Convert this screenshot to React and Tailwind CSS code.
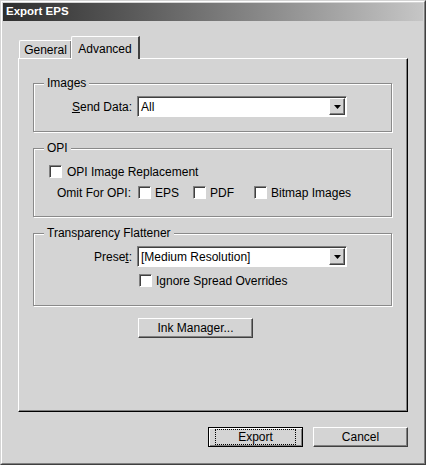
import React from "react";

const font = { fontFamily: '"Liberation Sans", Arial, sans-serif' };

function Check({ className = "" }) {
  return (
    <span
      className={
        "inline-block shrink-0 w-[13px] h-[13px] bg-white border border-t-[#808080] border-l-[#808080] border-b-white border-r-white shadow-[inset_1px_1px_0_#404040] " +
        className
      }
    />
  );
}

function Select({ value }) {
  return (
    <div className="w-[210px] h-[21px] bg-white border border-t-[#808080] border-l-[#808080] border-b-white border-r-white shadow-[inset_1px_1px_0_#404040] flex items-center">
      <span className="flex-1 pl-[3px] text-[12px] text-black leading-none">{value}</span>
      <span className="w-[16px] h-[17px] mr-[1px] bg-[#d4d4d4] border border-t-white border-l-white border-b-[#404040] border-r-[#404040] shadow-[inset_-1px_-1px_0_#808080] flex items-center justify-center">
        <svg width="7" height="4" viewBox="0 0 7 4"><path d="M0 0h7L3.5 4z" fill="#000" /></svg>
      </span>
    </div>
  );
}

function Group({ label, className = "", children }) {
  return (
    <div className={"relative border border-[#8a8a8a] shadow-[inset_1px_1px_0_#fff,1px_1px_0_#fff] " + className}>
      <span className="absolute left-[10px] top-[-8px] bg-[#d4d4d4] px-[3px] text-[12px] leading-[14px] text-black">
        {label}
      </span>
      {children}
    </div>
  );
}

function Button({ children, className = "", def = false }) {
  return (
    <div
      className={
        "h-[20px] flex items-center justify-center text-[12px] text-black bg-[#d4d4d4] " +
        (def
          ? "border border-black shadow-[inset_1px_1px_0_#fff,inset_-1px_-1px_0_#808080] "
          : "border border-t-white border-l-white border-b-[#404040] border-r-[#404040] shadow-[inset_-1px_-1px_0_#808080] ") +
        className
      }
    >
      {children}
    </div>
  );
}

export default function App() {
  return (
    <div
      style={font}
      className="w-[426px] h-[465px] bg-[#d4d4d4] border border-t-[#d4d4d4] border-l-[#d4d4d4] border-b-[#404040] border-r-[#404040] flex flex-col"
    >
      <div className="flex-1 flex flex-col border border-t-white border-l-white border-b-[#808080] border-r-[#808080] p-[1px]">
        {/* title bar */}
        <div className="h-[18px] bg-gradient-to-r from-[#2e2e2e] via-[#777] to-[#c6c6c6] flex items-center pl-[3px]">
          <span className="text-white font-bold text-[11.5px] leading-none">Export EPS</span>
        </div>

        {/* tabs */}
        <div className="mt-[15px] ml-[16px] flex items-end h-[22px]">
          <div className="h-[18px] w-[52px] border-t border-l border-white rounded-tl-[2px] flex items-center justify-center text-[12px] text-black pt-[1px] shadow-[inset_-1px_0_0_#808080]">
            General
          </div>
          <div className="relative z-10 h-[23px] -mb-[1px] w-[69px] bg-[#d4d4d4] border-t border-l border-white border-r-2 border-r-[#404040] rounded-tl-[2px] flex items-start justify-center pt-[3px] text-[12px] text-black">
            Advanced
          </div>
        </div>

        {/* panel */}
        <div className="ml-[15px] w-[390px] h-[354px] border border-t-white border-l-white border-b-black border-r-black shadow-[inset_-1px_-1px_0_#808080] px-[14px] pt-[24px]">
          <Group label="Images" className="h-[49px] w-[359px]">
            <div className="flex items-center mt-[12px]">
              <span className="w-[103px] text-right pr-[5px] text-[12px] text-black">
                <span className="underline">S</span>end Data:
              </span>
              <Select value="All" />
            </div>
          </Group>

          <Group label="OPI" className="mt-[16px] h-[69px] w-[359px]">
            <div className="flex items-center h-[13px] mt-[16px] ml-[15px]">
              <Check />
              <span className="ml-[5px] text-[12px] leading-none text-black">OPI Image Replacement</span>
            </div>
            <div className="flex items-center h-[13px] mt-[8px] ml-[23px] text-[12px] leading-none text-black">
              <span className="w-[81px]">Omit For OPI:</span>
              <Check />
              <span className="ml-[4px]">EPS</span>
              <Check className="ml-[14px]" />
              <span className="ml-[4px]">PDF</span>
              <Check className="ml-[20px]" />
              <span className="ml-[4px]">Bitmap Images</span>
            </div>
          </Group>

          <Group label="Transparency Flattener" className="mt-[16px] h-[73px] w-[359px]">
            <div className="flex items-center mt-[12px]">
              <span className="w-[103px] text-right pr-[5px] text-[12px] text-black">
                Prese<span className="underline">t</span>:
              </span>
              <Select value="[Medium Resolution]" />
            </div>
            <div className="flex items-center h-[13px] mt-[7px] ml-[105px]">
              <Check />
              <span className="ml-[4px] text-[12px] leading-none text-black">Ignore Spread Overrides</span>
            </div>
          </Group>

          <div className="mt-[12px] ml-[105px]">
            <Button className="w-[115px]">Ink Manager...</Button>
          </div>
        </div>

        {/* buttons */}
        <div className="mt-[15px] flex justify-end gap-[10px] pr-[15px]">
          <Button def className="w-[95px]">
            <span className="border border-dotted border-black px-[22px] leading-[14px]">Export</span>
          </Button>
          <Button className="w-[95px]">Cancel</Button>
        </div>
      </div>
    </div>
  );
}
